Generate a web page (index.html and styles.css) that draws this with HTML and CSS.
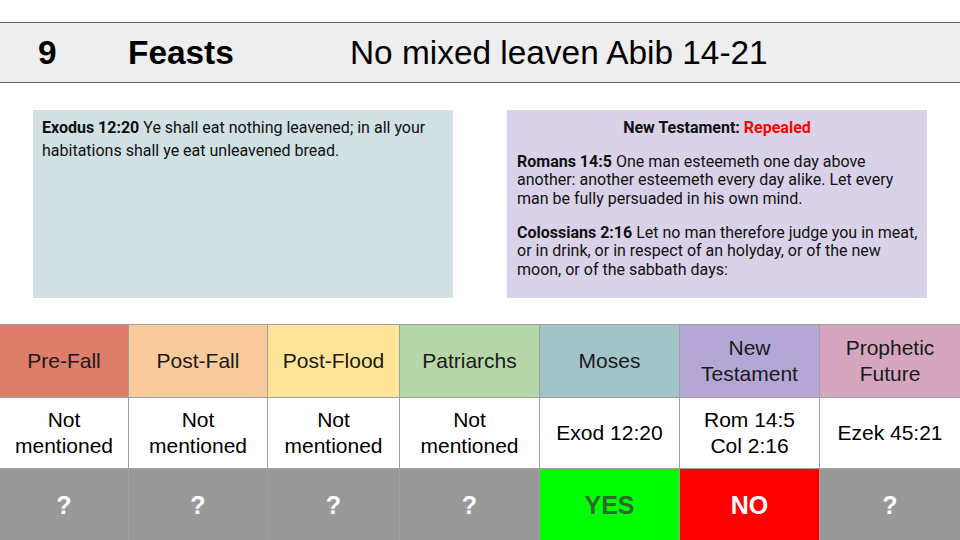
FILE: index.html
```html
<!DOCTYPE html>
<html lang="en">
<head>
<meta charset="utf-8">
<title>Feasts</title>
<link rel="stylesheet" href="styles.css">
</head>
<body>
<div class="slide">
  <header class="band">
    <span class="num">9</span>
    <span class="topic">Feasts</span>
    <span class="subtitle">No mixed leaven Abib 14-21</span>
  </header>

  <section class="boxes">
    <div class="box box-ot">
      <p><b>Exodus 12:20</b> Ye shall eat nothing leavened; in all your habitations shall ye eat unleavened bread.</p>
    </div>
    <div class="box box-nt">
      <p class="nt-title"><b>New Testament: <span class="repealed">Repealed</span></b></p>
      <p class="verse"><b>Romans 14:5</b> One man esteemeth one day above another: another esteemeth every day alike. Let every man be fully persuaded in his own mind.</p>
      <p class="verse"><b>Colossians 2:16</b> Let no man therefore judge you in meat, or in drink, or in respect of an holyday, or of the new moon, or of the sabbath days:</p>
    </div>
  </section>

  <section class="grid">
    <div class="cell head c-prefall">Pre-Fall</div>
    <div class="cell head c-postfall">Post-Fall</div>
    <div class="cell head c-postflood">Post-Flood</div>
    <div class="cell head c-patriarchs">Patriarchs</div>
    <div class="cell head c-moses">Moses</div>
    <div class="cell head c-nt">New<br>Testament</div>
    <div class="cell head c-future">Prophetic<br>Future</div>

    <div class="cell ref">Not<br>mentioned</div>
    <div class="cell ref">Not<br>mentioned</div>
    <div class="cell ref">Not<br>mentioned</div>
    <div class="cell ref">Not<br>mentioned</div>
    <div class="cell ref">Exod 12:20</div>
    <div class="cell ref">Rom 14:5<br>Col 2:16</div>
    <div class="cell ref">Ezek 45:21</div>

    <div class="cell verdict unknown">?</div>
    <div class="cell verdict unknown">?</div>
    <div class="cell verdict unknown">?</div>
    <div class="cell verdict unknown">?</div>
    <div class="cell verdict yes">YES</div>
    <div class="cell verdict no">NO</div>
    <div class="cell verdict unknown">?</div>
  </section>
</div>
</body>
</html>
```

FILE: styles.css
```css
html, body {
  margin: 0;
  padding: 0;
  background: #ffffff;
}

.slide {
  width: 960px;
  height: 540px;
  overflow: hidden;
  display: flex;
  flex-direction: column;
  font-family: "Liberation Sans", Arial, sans-serif;
  color: #000;
}

.band {
  margin-top: 22px;
  height: 59px;
  background: #eeeeee;
  border-top: 1px solid #666666;
  border-bottom: 1px solid #666666;
  display: flex;
  align-items: center;
  font-size: 33.4px;
  line-height: 1;
}

.num {
  font-weight: bold;
  margin-left: 38px;
  width: 90px;
}

.topic {
  font-weight: bold;
  width: 222px;
}

.subtitle {
  font-weight: normal;
}

.boxes {
  margin-top: 27px;
  display: flex;
  padding-left: 33px;
  gap: 54px;
  height: 189px;
}

.box {
  width: 420px;
  box-sizing: border-box;
  font-family: Roboto, "Noto Sans", sans-serif;
  font-size: 16px;
  color: #111;
}

.box p {
  margin: 0;
}

.box-ot {
  background: #d0e0e3;
  padding: 6px 9px 0 9px;
  line-height: 23px;
}

.box-nt {
  background: #d9d2e9;
  padding: 9px 4px 0 10px;
  line-height: 18.5px;
}

.nt-title {
  text-align: center;
  padding-right: 6px;
}

.box-nt .verse {
  margin-top: 15.5px;
}

.box-nt .verse + .verse {
  margin-top: 15.5px;
}

.repealed {
  color: #ff0000;
}

.grid {
  margin-top: 26px;
  display: grid;
  grid-template-columns: 128px 138px 131px 139px 139px 139px 140px;
  grid-template-rows: 72px 70px 71px;
  gap: 1px;
  background: #a0a0a0;
  border-top: 1px solid #a0a0a0;
}

.cell {
  display: flex;
  align-items: center;
  justify-content: center;
  text-align: center;
  font-size: 21px;
  line-height: 26px;
  background: #ffffff;
}

.head { color: #1a1a1a; }
.c-prefall { background: #dd7e6b; }
.c-postfall { background: #f9cb9c; }
.c-postflood { background: #ffe599; }
.c-patriarchs { background: #b6d7a8; }
.c-moses { background: #a2c4c9; }
.c-nt { background: #b4a7d6; }
.c-future { background: #d5a6bd; }

.verdict {
  font-weight: bold;
  font-size: 25px;
}

.unknown {
  background: #999999;
  color: #ffffff;
}

.yes {
  background: #00ff00;
  color: #2d6b2d;
}

.no {
  background: #ff0000;
  color: #ffffff;
}
```
